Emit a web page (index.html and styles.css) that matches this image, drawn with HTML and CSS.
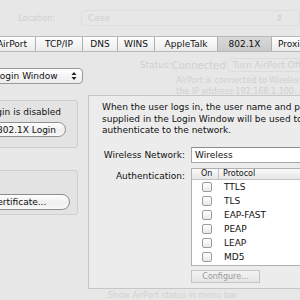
FILE: index.html
```html
<!DOCTYPE html>
<html>
<head>
<meta charset="utf-8">
<link rel="stylesheet" href="styles.css">
</head>
<body>
<div class="win">
  <div class="loc">
    <span class="loc-label">Location:</span>
    <div class="loc-popup"><span>Case</span><span class="loc-arrows">&#8661;</span></div>
  </div>
  <div class="tabs">
    <div class="tab t1">AirPort</div>
    <div class="tab t2">TCP/IP</div>
    <div class="tab t3">DNS</div>
    <div class="tab t4">WINS</div>
    <div class="tab t5">AppleTalk</div>
    <div class="tab t6 sel">802.1X</div>
    <div class="tab t7">Proxies</div>
  </div>
  <div class="main">
    <div class="left">
      <div class="popup">
        <span>Login Window</span>
        <svg class="arrows" width="6" height="10" viewBox="0 0 6 10"><path d="M0.5 4 L3 1 L5.5 4 Z M0.5 6 L3 9 L5.5 6 Z" fill="#222"/></svg>
      </div>
      <div class="group g1">
        <p class="gtext">Login is disabled</p>
        <button class="pill b1">802.1X Login</button>
      </div>
      <div class="group g2">
        <button class="pill b2">Certificate...</button>
      </div>
    </div>
    <div class="right">
      <div class="status">
        <div class="srow"><span class="slabel">Status:</span><span class="sval">Connected</span><span class="sbtn">Turn AirPort Off</span></div>
        <div class="sline">AirPort is connected to Wireless and has</div>
        <div class="sline">the IP address 192.168.1.100.</div>
      </div>
      <div class="panel">
        <p class="desc">When the user logs in, the user name and password supplied in the Login Window will be used to authenticate to the network.</p>
        <div class="form">
          <label class="lbl">Wireless Network:</label>
          <div class="field">Wireless</div>
          <label class="lbl lbl-auth">Authentication:</label>
          <div class="authcol">
            <div class="table">
              <div class="thead"><span class="c-on">On</span><span class="c-proto">Protocol</span></div>
              <div class="row"><span class="c-on"><i class="cb"></i></span><span class="c-proto">TTLS</span></div>
              <div class="row"><span class="c-on"><i class="cb"></i></span><span class="c-proto">TLS</span></div>
              <div class="row"><span class="c-on"><i class="cb"></i></span><span class="c-proto">EAP-FAST</span></div>
              <div class="row"><span class="c-on"><i class="cb"></i></span><span class="c-proto">PEAP</span></div>
              <div class="row"><span class="c-on"><i class="cb"></i></span><span class="c-proto">LEAP</span></div>
              <div class="row"><span class="c-on"><i class="cb"></i></span><span class="c-proto">MD5</span></div>
            </div>
            <button class="config">Configure...</button>
          </div>
        </div>
      </div>
      <div class="foot">Show AirPort status in menu bar</div>
    </div>
  </div>
</div>
</body>
</html>
```
FILE: styles.css
```css
html, body {
  margin: 0;
  padding: 0;
}
body {
  width: 300px;
  height: 300px;
  overflow: hidden;
  background: #e7e7e7;
  font-family: "DejaVu Sans", sans-serif;
  font-size: 9px;
  color: #111;
}
.win {
  width: 300px;
}
.loc {
  height: 36px;
  display: flex;
  align-items: center;
  color: #d0d0d0;
}
.loc-label {
  width: 59px;
  text-align: right;
  font-size: 8px;
}
.loc-popup {
  margin-left: 26px;
  width: 195px;
  height: 14px;
  border: 1px solid #dedede;
  border-radius: 4px;
  display: flex;
  align-items: center;
  justify-content: space-between;
  padding: 0 16px 0 6px;
  flex-shrink: 0;
}
.loc-arrows {
  font-size: 9px;
}
.tabs {
  display: flex;
  height: 14px;
  margin-left: -11px;
  border-top: 1px solid #b8b8b8;
  border-bottom: 1px solid #b8b8b8;
  background: linear-gradient(#fdfdfd, #ececec);
  width: 340px;
}
.tab {
  flex-shrink: 0;
  display: flex;
  align-items: center;
  justify-content: center;
  border-right: 1px solid #b0b0b0;
  white-space: nowrap;
  color: #111;
}
.t1 { width: 46px; }
.t2 { width: 46px; }
.t3 { width: 34px; }
.t4 { width: 36px; }
.t5 { width: 62px; }
.t6 { width: 53px; }
.t7 { width: 50px; border-right: none; justify-content: flex-start; padding-left: 6px; }
.tab.sel {
  background: linear-gradient(#d9d9d9, #c9c9c9);
}
.main {
  display: grid;
  grid-template-columns: 88px 212px;
}
.left {
  margin-left: -40px;
  display: flex;
  flex-direction: column;
  align-items: stretch;
}
.popup {
  margin-top: 16px;
  margin-right: 5px;
  height: 14px;
  border: 1px solid #9a9a9a;
  border-radius: 4px;
  background: linear-gradient(#ffffff, #ececec);
  display: flex;
  align-items: center;
  justify-content: space-between;
  padding: 0 5px 0 34px;
}
.group {
  margin-right: 10px;
  border: 1px solid #cfcfcf;
  border-radius: 3px;
  background: #e3e3e3;
  display: flex;
  flex-direction: column;
  align-items: flex-start;
}
.g1 {
  margin-top: 16px;
  height: 46px;
}
.gtext {
  margin: 6px 0 5px 25px;
}
.pill {
  font-family: inherit;
  font-size: 9px;
  color: #111;
  border: 1px solid #8e8e8e;
  border-radius: 8px;
  background: linear-gradient(#ffffff, #efefef 55%, #f8f8f8);
  padding: 0;
  height: 15px;
  display: flex;
  align-items: center;
}
.b1 {
  width: 76px;
  margin-left: 29px;
  padding-left: 6px;
}
.g2 {
  margin-top: 22px;
  height: 45px;
  justify-content: flex-end;
  padding-bottom: 4px;
  box-sizing: border-box;
}
.b2 {
  width: 100px;
  margin-left: 9px;
  padding-left: 20px;
  height: 16px;
}
.right {
  display: flex;
  flex-direction: column;
}
.status {
  height: 43px;
  color: #d0d0d0;
}
.srow {
  display: flex;
  align-items: center;
  height: 20px;
  margin-top: 3px;
}
.slabel {
  margin-left: 52px;
  width: 36px;
}
.sval {
  font-size: 10px;
  width: 84px;
}
.sbtn {
  border: 1px solid #dcdcdc;
  border-radius: 7px;
  padding: 1px 6px;
  white-space: nowrap;
}
.sline {
  margin-left: 88px;
  font-size: 8px;
  line-height: 11px;
  white-space: nowrap;
}
.panel {
  height: 194px;
  width: 230px;
  border: 1px solid #c6c6c6;
  background: #ececec;
  box-sizing: border-box;
  padding: 6px 0 0 13px;
}
.desc {
  margin: 0;
  width: 250px;
  line-height: 11.5px;
}
.form {
  margin-top: 10px;
  display: grid;
  grid-template-columns: 83px 1fr;
  column-gap: 6px;
  row-gap: 5px;
  align-items: start;
}
.lbl {
  text-align: right;
  line-height: 16px;
}
.lbl-auth {
  margin-top: 0;
}
.field {
  height: 16px;
  border: 1px solid #a8a8a8;
  border-top-color: #8c8c8c;
  background: #fff;
  box-sizing: border-box;
  padding-left: 3px;
  line-height: 14px;
  width: 140px;
}
.authcol {
  display: flex;
  flex-direction: column;
  align-items: flex-start;
}
.table {
  width: 140px;
  background: #fff;
  border: 1px solid #b0b0b0;
  box-sizing: border-box;
  padding-bottom: 1px;
}
.thead {
  height: 10px;
  display: flex;
  align-items: center;
  background: linear-gradient(#fafafa, #e6e6e6);
  border-bottom: 1px solid #c4c4c4;
  font-size: 8px;
}
.thead .c-on {
  width: 27px;
  padding-left: 9px;
  box-sizing: border-box;
  border-right: 1px solid #c4c4c4;
  height: 10px;
  line-height: 10px;
}
.thead .c-proto {
  padding-left: 4px;
}
.row {
  height: 14px;
  display: flex;
  align-items: center;
}
.row .c-on {
  width: 32px;
  padding-left: 10px;
  box-sizing: border-box;
  display: flex;
}
.cb {
  display: block;
  width: 10px;
  height: 10px;
  border: 1px solid #9c9c9c;
  border-radius: 2px;
  background: linear-gradient(#ffffff, #e8e8e8);
  box-sizing: border-box;
}
.config {
  margin-top: 4px;
  width: 69px;
  height: 13px;
  font-family: inherit;
  font-size: 8px;
  color: #9a9a9a;
  border: 1px solid #c4c4c4;
  background: linear-gradient(#f2f2f2, #e6e6e6);
  padding: 0;
}
.foot {
  margin-left: 20px;
  margin-top: 2px;
  font-size: 8px;
  color: #d2d2d2;
  white-space: nowrap;
}
```
